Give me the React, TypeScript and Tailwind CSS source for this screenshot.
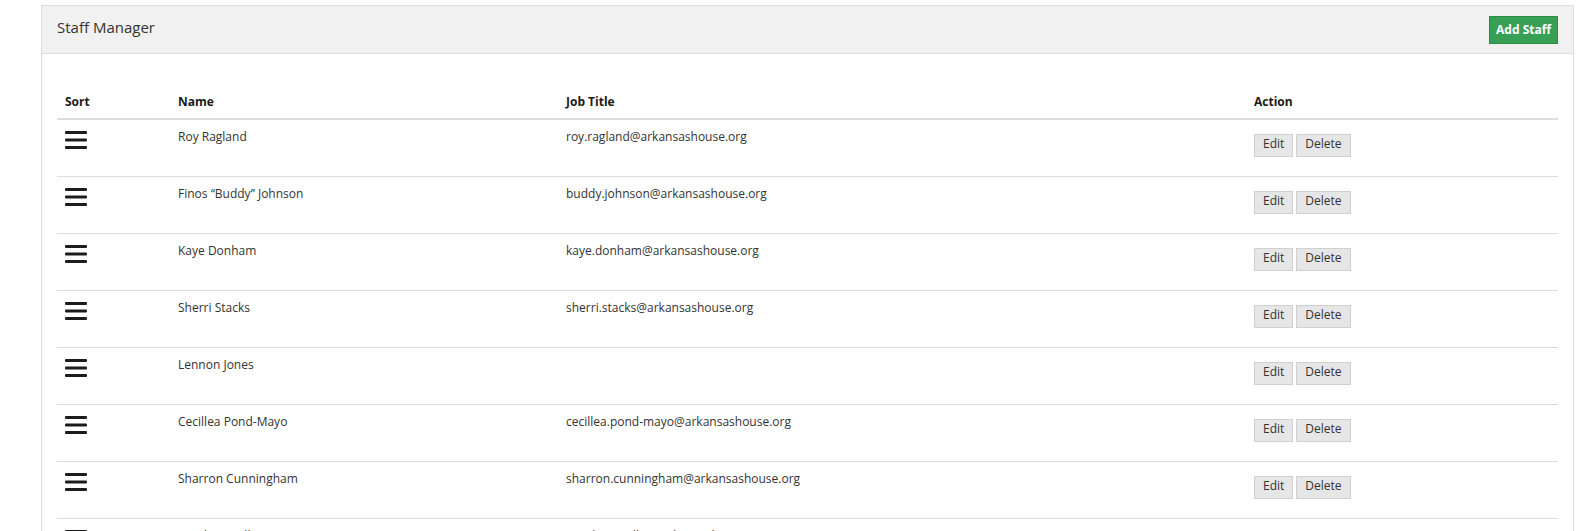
const STAFF = [
  { name: 'Roy Ragland', email: 'roy.ragland@arkansashouse.org' },
  { name: 'Finos “Buddy” Johnson', email: 'buddy.johnson@arkansashouse.org' },
  { name: 'Kaye Donham', email: 'kaye.donham@arkansashouse.org' },
  { name: 'Sherri Stacks', email: 'sherri.stacks@arkansashouse.org' },
  { name: 'Lennon Jones', email: '' },
  { name: 'Cecillea Pond-Mayo', email: 'cecillea.pond-mayo@arkansashouse.org' },
  { name: 'Sharron Cunningham', email: 'sharron.cunningham@arkansashouse.org' },
  { name: 'Matthew Miller', email: 'matthew.miller@arkansashouse.org' },
]

function SortHandle() {
  return (
    <svg width="22" height="18" viewBox="0 0 22 18" className="block">
      <rect x="0" y="0" width="22" height="3" rx="1" fill="#1c1c1c" />
      <rect x="0" y="7.5" width="22" height="3" rx="1" fill="#1c1c1c" />
      <rect x="0" y="15" width="22" height="3" rx="1" fill="#1c1c1c" />
    </svg>
  )
}

export default function App() {
  return (
    <div className="min-h-screen bg-white pt-[5px] pl-[41px] font-['Open_Sans',sans-serif] text-[#333]">
      <div className="w-[1533px] border border-[#dddddd]">
        {/* Heading */}
        <div className="flex h-[48px] items-start justify-between border-b border-[#dddddd] bg-[#f1f1f1] px-[15px] pt-[10px]">
          <h3 className="text-[15px] leading-[22px] text-[#333]">Staff Manager</h3>
          <button className="h-[28px] border border-[#2f8c47] bg-[#38a055] px-[6px] text-[12px] font-bold text-white">
            Add Staff
          </button>
        </div>

        {/* Body */}
        <div className="px-[15px] pt-[31px]">
          <div className="grid h-[35px] grid-cols-[113px_388px_688px_1fr] border-b-2 border-[#dddddd] text-[12px] leading-[17px] font-bold text-[#1a1a1a]">
            <div className="px-2 pt-2">Sort</div>
            <div className="px-2 pt-2">Name</div>
            <div className="px-2 pt-2">Job Title</div>
            <div className="px-2 pt-2">Action</div>
          </div>

          {STAFF.map((s) => (
            <div
              key={s.name}
              className="grid h-[57px] grid-cols-[113px_388px_688px_1fr] border-b border-[#dddddd] text-[12px] leading-[17px]"
            >
              <div className="pl-2 pt-[11px]">
                <SortHandle />
              </div>
              <div className="px-2 pt-2">{s.name}</div>
              <div className="px-2 pt-2">{s.email}</div>
              <div className="flex items-start gap-[3px] px-2 pt-[14px]">
                <button className="h-[23px] border border-[#d0d0d0] bg-[#e6e6e6] px-2 pb-[5px] text-[12px] text-[#333]">
                  Edit
                </button>
                <button className="h-[23px] border border-[#d0d0d0] bg-[#e6e6e6] px-2 pb-[5px] text-[12px] text-[#333]">
                  Delete
                </button>
              </div>
            </div>
          ))}
        </div>
      </div>
    </div>
  )
}
